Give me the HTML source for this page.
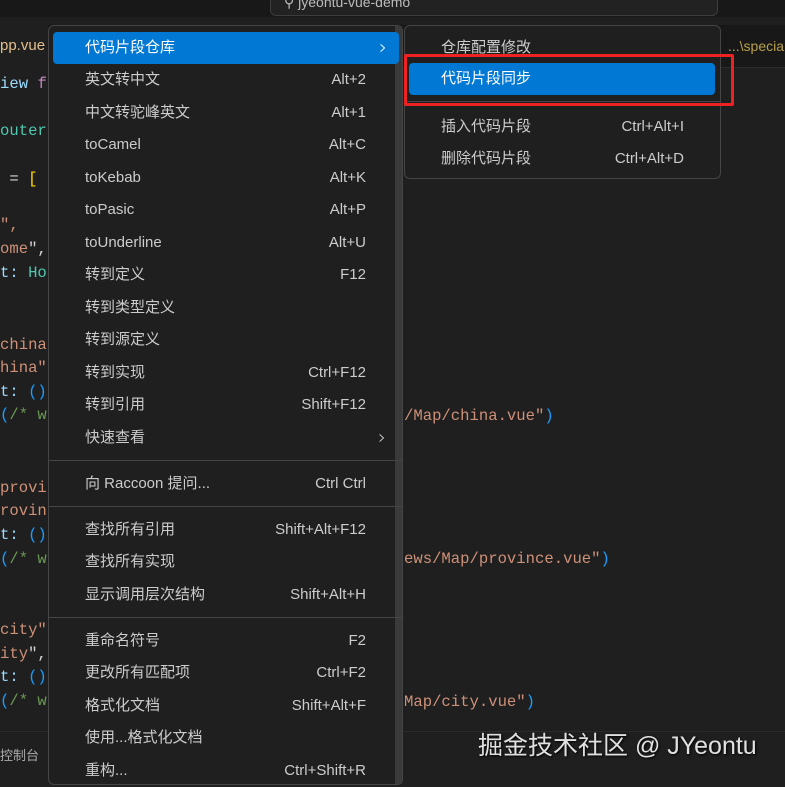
<!DOCTYPE html><html><head><meta charset="utf-8"><style>
*{margin:0;padding:0;box-sizing:border-box}
body{width:785px;height:779px;background:#1f1f1f;position:relative;overflow:hidden;font-family:"Liberation Sans","Noto Sans CJK SC",sans-serif;color:#cccccc}
.a{position:absolute;white-space:nowrap}
.code{font-family:"Liberation Mono","Noto Sans CJK SC",monospace;font-size:15.6px;left:0}
.s{color:#ce9178}.b{color:#179fff}.g{color:#6a9955}.y{color:#ffd700}.t{color:#4ec9b0}.p{color:#c586c0}.v{color:#9cdcfe}.w{color:#d4d4d4}
.menu{position:absolute;left:48px;top:25px;width:355px;height:760px;background:#1f1f1f;border:1px solid #454545;border-radius:6px}
.it{position:absolute;left:0;width:100%;height:32px;font-size:15px;line-height:32px}
.it .l{position:absolute;left:36px}.it .r{position:absolute;right:36px}
.sep{position:absolute;left:0;width:100%;height:1px;background:#454545}
.hl{background:#0078d4;color:#fff;border-radius:4px}
.chev{font-size:20px;font-family:"DejaVu Sans",sans-serif;font-weight:200}
</style></head><body>
<div class="a" style="left:0;top:0;width:785px;height:17px;background:#181818"></div>
<div class="a" style="left:270px;top:-6px;width:448px;height:22px;border:1px solid #3c3c3c;border-radius:6px;background:#222"></div>
<div class="a" style="left:284px;top:-6px;font-size:14px;color:#bbb">⚲ jyeontu-vue-demo</div>
<div class="a" style="left:0;top:25px;width:785px;height:43px;background:#181818;border-bottom:1px solid #2b2b2b"></div>
<div class="a" style="left:0;top:25px;width:48px;height:43px;background:#1f1f1f"></div>
<div class="a" style="left:0;top:37px;font-size:15px;color:#e2c08d">pp.vue</div>
<div class="a" style="left:728px;top:38px;font-size:14px;color:#b8a04a">...\specia</div>
<div class="a code" style="top:75px"><span class="v">iew</span> <span class="p">f</span></div>
<div class="a code t" style="top:122px">outer</div>
<div class="a code w" style="top:170px">&nbsp;= <span class="y">[</span></div>
<div class="a code s" style="top:216px">",</div>
<div class="a code s" style="top:240px">ome<span class="w">",</span></div>
<div class="a code v" style="top:264px">t: <span class="t">Ho</span></div>
<div class="a code s" style="top:336px">china</div>
<div class="a code s" style="top:359px">hina"</div>
<div class="a code v" style="top:383px">t: <span class="b">()</span></div>
<div class="a code" style="top:406px"><span class="b">(</span><span class="g">/* w</span></div>
<div class="a code s" style="top:407px;left:404px">/Map/china.vue"<span class="b">)</span></div>
<div class="a code s" style="top:479px">provi</div>
<div class="a code s" style="top:502px">rovin</div>
<div class="a code v" style="top:526px">t: <span class="b">()</span></div>
<div class="a code" style="top:550px"><span class="b">(</span><span class="g">/* w</span></div>
<div class="a code s" style="top:550px;left:404px">ews/Map/province.vue"<span class="b">)</span></div>
<div class="a code s" style="top:621px">city"</div>
<div class="a code s" style="top:645px">ity<span class="w">",</span></div>
<div class="a code v" style="top:668px">t: <span class="b">()</span></div>
<div class="a code" style="top:692px"><span class="b">(</span><span class="g">/* w</span></div>
<div class="a code s" style="top:693px;left:404px">Map/city.vue"<span class="b">)</span></div>
<div class="a" style="left:0;top:731px;width:785px;height:1px;background:#2b2b2b"></div>
<div class="a" style="left:0;top:745px;font-size:13px;color:#aaa">控制台</div>
<div class="a" style="left:478px;top:726px;font-size:25px;color:#e0e0e0;text-shadow:1px 1px 2px #000">掘金技术社区 @ JYeontu</div>

<div class="menu">
<div class="a" style="right:0;top:0;width:7px;height:100%;background:#3a3a3a"></div>
<div class="it hl" style="top:6px;left:4px;width:346px"><span class="l" style="left:32px">代码片段仓库</span><span class="r chev" style="right:12px;top:-1px">›</span></div>
<div class="it" style="top:38px"><span class="l">英文转中文</span><span class="r">Alt+2</span></div>
<div class="it" style="top:71px"><span class="l">中文转驼峰英文</span><span class="r">Alt+1</span></div>
<div class="it" style="top:103px"><span class="l">toCamel</span><span class="r">Alt+C</span></div>
<div class="it" style="top:136px"><span class="l">toKebab</span><span class="r">Alt+K</span></div>
<div class="it" style="top:168px"><span class="l">toPasic</span><span class="r">Alt+P</span></div>
<div class="it" style="top:201px"><span class="l">toUnderline</span><span class="r">Alt+U</span></div>
<div class="it" style="top:233px"><span class="l">转到定义</span><span class="r">F12</span></div>
<div class="it" style="top:266px"><span class="l">转到类型定义</span></div>
<div class="it" style="top:298px"><span class="l">转到源定义</span></div>
<div class="it" style="top:331px"><span class="l">转到实现</span><span class="r">Ctrl+F12</span></div>
<div class="it" style="top:363px"><span class="l">转到引用</span><span class="r">Shift+F12</span></div>
<div class="it" style="top:396px"><span class="l">快速查看</span><span class="r chev" style="right:16px;top:-1px">›</span></div>
<div class="sep" style="top:434px"></div>
<div class="it" style="top:442px"><span class="l">向 Raccoon 提问...</span><span class="r">Ctrl Ctrl</span></div>
<div class="sep" style="top:480px"></div>
<div class="it" style="top:488px"><span class="l">查找所有引用</span><span class="r">Shift+Alt+F12</span></div>
<div class="it" style="top:520px"><span class="l">查找所有实现</span></div>
<div class="it" style="top:553px"><span class="l">显示调用层次结构</span><span class="r">Shift+Alt+H</span></div>
<div class="sep" style="top:591px"></div>
<div class="it" style="top:599px"><span class="l">重命名符号</span><span class="r">F2</span></div>
<div class="it" style="top:631px"><span class="l">更改所有匹配项</span><span class="r">Ctrl+F2</span></div>
<div class="it" style="top:664px"><span class="l">格式化文档</span><span class="r">Shift+Alt+F</span></div>
<div class="it" style="top:696px"><span class="l">使用...格式化文档</span></div>
<div class="it" style="top:729px"><span class="l">重构...</span><span class="r">Ctrl+Shift+R</span></div>
</div>

<div class="a" style="left:404px;top:25px;width:317px;height:154px;background:#1f1f1f;border:1px solid #454545;border-radius:6px">
<div class="it" style="top:6px"><span class="l">仓库配置修改</span></div>
<div class="it hl" style="top:37px;left:4px;width:306px"><span class="l" style="left:32px">代码片段同步</span></div>
<div class="sep" style="top:75px"></div>
<div class="it" style="top:85px"><span class="l">插入代码片段</span><span class="r">Ctrl+Alt+I</span></div>
<div class="it" style="top:117px"><span class="l">删除代码片段</span><span class="r">Ctrl+Alt+D</span></div>
</div>
<div class="a" style="left:404px;top:54px;width:330px;height:52px;border:3px solid #ee2222;border-radius:2px"></div>
</body></html>
